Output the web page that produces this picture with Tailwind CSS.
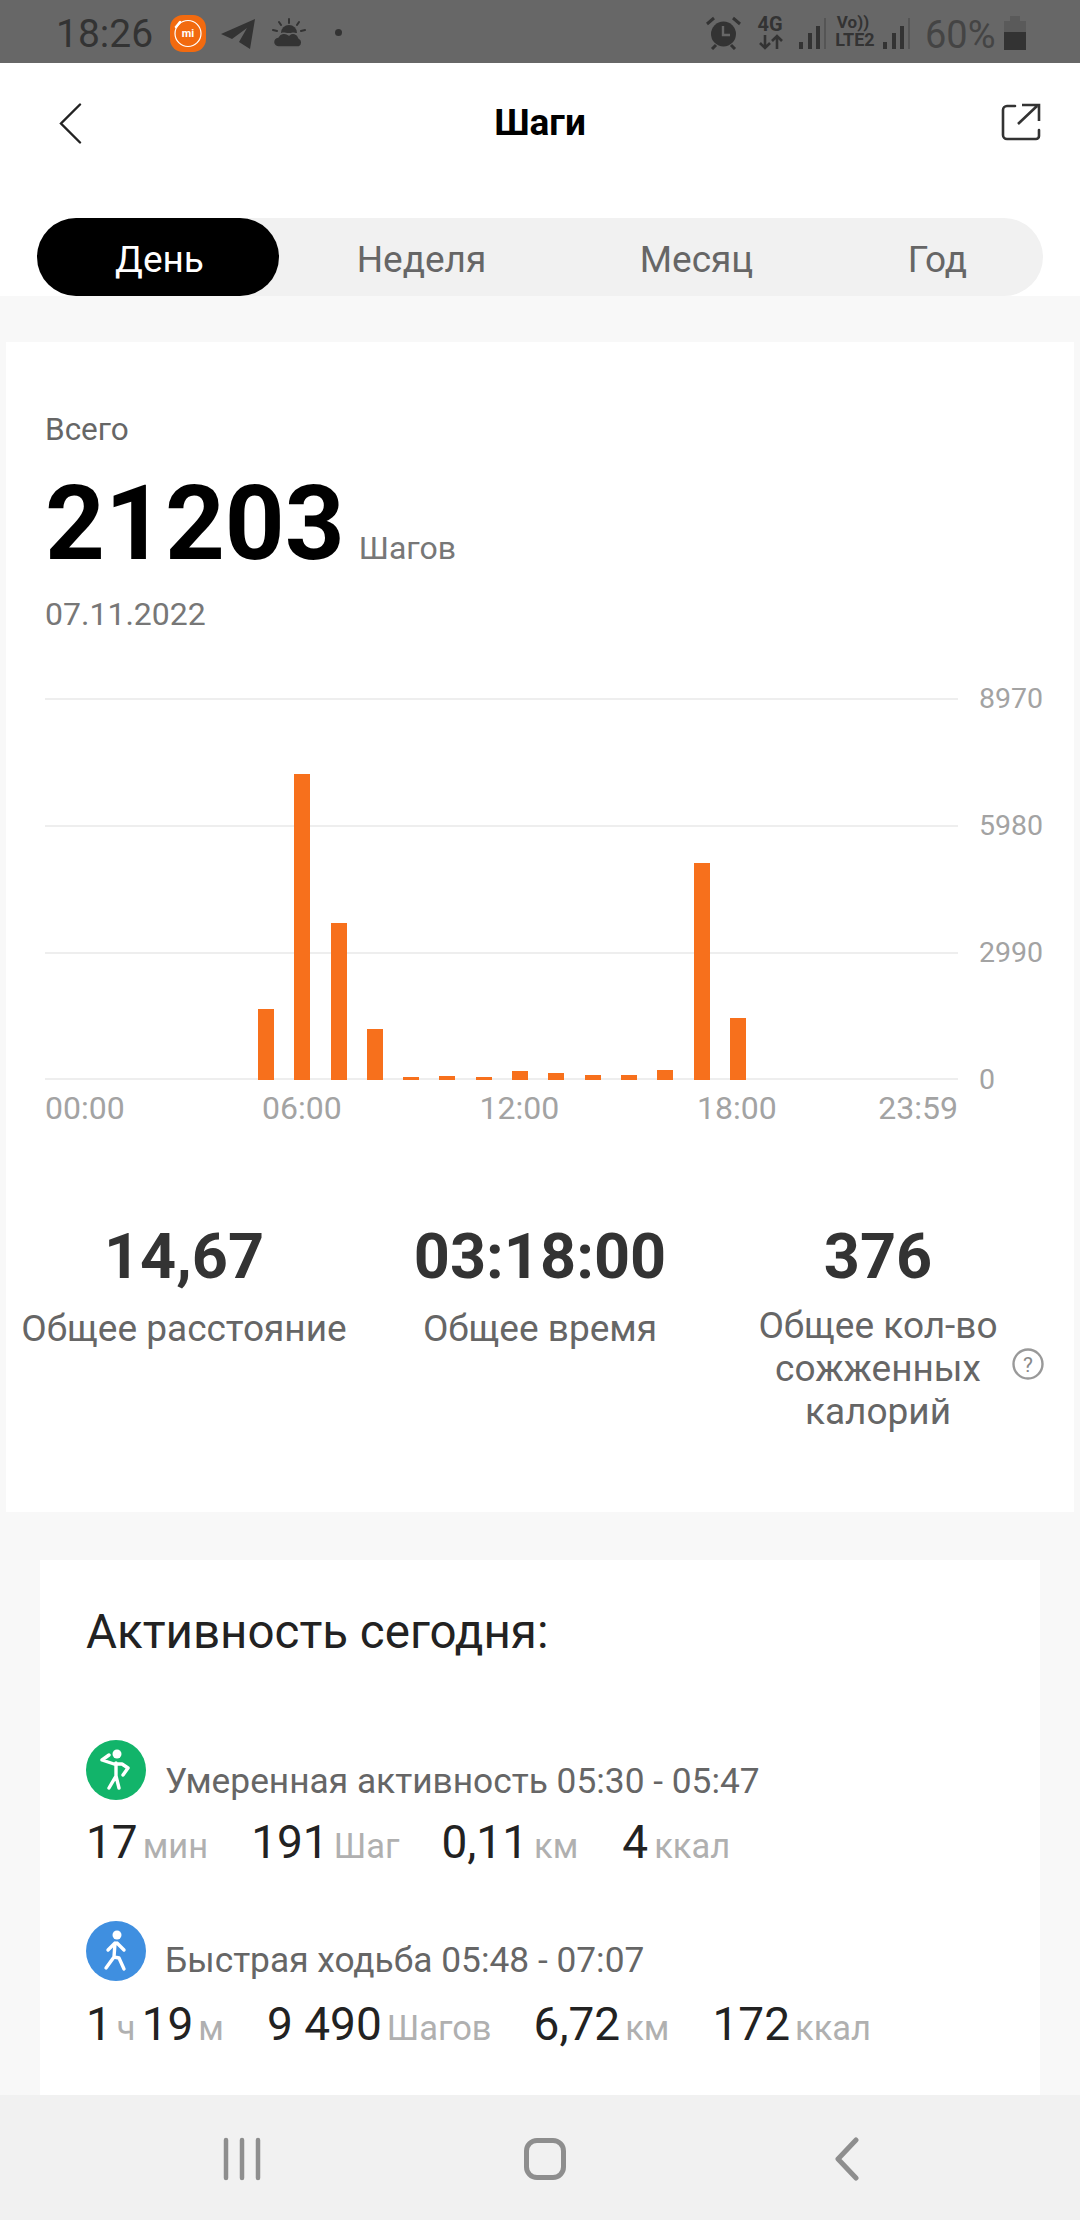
<!doctype html>
<html lang="ru">
<head>
<meta charset="utf-8">
<script src="https://cdn.jsdelivr.net/npm/@tailwindcss/browser@4"></script>
</head>
<body class="m-0">
<div class="w-[1080px] h-[2220px] flex flex-col overflow-hidden bg-[#f8f8f8] font-['Roboto',sans-serif]">
  <!-- status bar -->
  <div class="h-[63px] shrink-0 bg-[#676767] relative text-[#333]">
    <span class="absolute left-[56px] top-[11px] text-[39px] leading-[46px]">18:26</span>
    <div class="absolute left-[170px] top-[15px] w-[36px] h-[37px] rounded-[13px] bg-[#f26a0f] flex items-center justify-center">
      <svg class="absolute inset-0" width="36" height="37" viewBox="0 0 36 37"><circle cx="18" cy="18.5" r="13" fill="none" stroke="#fff" stroke-width="1.2"/><path d="M6 12 L10 7" stroke="#fff" stroke-width="2.4" stroke-linecap="round"/></svg>
      <span class="text-[11px] leading-none font-bold text-white relative">mi</span>
    </div>
    <svg class="absolute left-[221px] top-[19px]" width="34" height="30" viewBox="0 0 34 30"><path d="M0 15 L34 0 L29 30 L18 23 L26 9 L11 20 Z" fill="#333"/></svg>
    <svg class="absolute left-[272px] top-[18px]" width="34" height="30" viewBox="0 0 34 30"><path d="M9 15a8 8 0 0 1 16 0z" fill="#333"/><path d="M17 1v4M7 4l2 3M27 4l-2 3M1 12l4 1M33 12l-4 1" stroke="#333" stroke-width="2" stroke-linecap="round"/><path d="M7 29a5 5 0 0 1-1-10 7 7 0 0 1 11-2 6 6 0 0 1 10 3 5 5 0 0 1 0 9z" fill="#333" stroke="#676767" stroke-width="1.5"/></svg>
    <div class="absolute left-[335px] top-[29px] w-[7px] h-[7px] rounded-full bg-[#333]"></div>

    <svg class="absolute left-[706px] top-[16px]" width="35" height="34" viewBox="0 0 35 34"><circle cx="17.5" cy="18" r="12.5" fill="#333"/><path d="M17 10v9h7" stroke="#676767" stroke-width="2.4" fill="none"/><path d="M1 8l7-6M34 8l-7-6M6 33l4-4M29 33l-4-4" stroke="#333" stroke-width="3"/></svg>
    <div class="absolute left-[756px] top-[15px] w-[28px] text-center text-[20px] leading-[19px] font-bold">4G</div>
    <svg class="absolute left-[759px] top-[34px]" width="24" height="16" viewBox="0 0 24 16"><path d="M6 1v13M1 9l5 5 5-5M18 15V2M13 7l5-5 5 5" stroke="#333" stroke-width="2.6" fill="none"/></svg>
    <svg class="absolute left-[799px] top-[18px]" width="28" height="31" viewBox="0 0 28 31"><rect x="0" y="24" width="4" height="7" fill="#333"/><rect x="9" y="15" width="4" height="16" fill="#333"/><rect x="17" y="8" width="4" height="23" fill="#333"/><rect x="25" y="0" width="2" height="31" fill="#555"/></svg>
    <div class="absolute left-[832px] top-[13px] w-[46px] text-center font-bold text-[17px] leading-[18px]"><div class="pr-[4px]">Vo))</div><div class="text-[18px]">LTE2</div></div>
    <svg class="absolute left-[883px] top-[18px]" width="28" height="31" viewBox="0 0 28 31"><rect x="0" y="24" width="4" height="7" fill="#333"/><rect x="9" y="15" width="4" height="16" fill="#333"/><rect x="17" y="8" width="4" height="23" fill="#333"/><rect x="25" y="0" width="2" height="31" fill="#555"/></svg>
    <span class="absolute left-[925px] top-[13px] text-[38px] leading-[44px] text-[#444]">60%</span>
    <svg class="absolute left-[1004px] top-[16px]" width="22" height="34" viewBox="0 0 22 34"><path d="M6 0h10v5h6v29H0V5h6z" fill="#5a5a5a"/><rect y="16" width="22" height="18" fill="#333"/></svg>
  </div>

  <!-- top area -->
  <div class="shrink-0 bg-white h-[233px] flex flex-col">
    <div class="h-[155px] relative">
      <h1 class="pt-[37px] text-center text-[37px] leading-[46px] font-bold text-black">Шаги</h1>
      <svg class="absolute left-[59px] top-[40px]" width="23" height="41" viewBox="0 0 23 41"><path d="M21 1.5 L2 20.5 L21 39.5" fill="none" stroke="#222" stroke-width="2.4" stroke-linecap="round"/></svg>
      <svg class="absolute left-[1001px] top-[40px]" width="40" height="38" viewBox="0 0 40 38"><path d="M14 3H6a4 4 0 0 0-4 4v25a4 4 0 0 0 4 4h29a3 3 0 0 0 3-3v-6" fill="none" stroke="#333" stroke-width="2.6" stroke-linecap="round"/><path d="M17 21 L36 3M21 2h17v16" fill="none" stroke="#333" stroke-width="2.6"/></svg>
    </div>
    <div class="mx-[37px] h-[78px] rounded-[39px] bg-[#f1f1f1] flex text-[37px] leading-[84px] text-[#666] text-center">
      <div class="w-[242px] pl-[3px] rounded-[39px] bg-black text-white">День</div>
      <div class="w-[282px] pl-[3px]">Неделя</div>
      <div class="w-[268px] pl-[3px]">Месяц</div>
      <div class="w-[214px] pl-[3px]">Год</div>
    </div>
  </div>

  <!-- main -->
  <div class="flex-1 min-h-0 overflow-hidden pt-[46px]">
    <section class="mx-[6px] h-[1170px] bg-white pl-[39px] pt-[68px] relative">
      <div class="text-[31.5px] leading-[40px] text-[#666]">Всего</div>
      <div class="flex items-baseline mt-[18px] h-[112px]">
        <span class="text-[104.5px] leading-[112px] font-bold text-black">21203</span>
        <span class="ml-[14px] text-[32px] text-[#777]">Шагов</span>
      </div>
      <div class="text-[32px] leading-[40px] mt-[14px] text-[#777]">07.11.2022</div>

      <!-- chart -->
      <div class="relative mt-[64px] w-[913px] h-[382px]">
        <div class="absolute inset-x-0 top-0 border-t-2 border-[#eeeeee]"></div>
        <div class="absolute inset-x-0 top-[127px] border-t-2 border-[#eeeeee]"></div>
        <div class="absolute inset-x-0 top-[254px] border-t-2 border-[#eeeeee]"></div>
        <div class="absolute inset-x-0 top-[380px] border-t-2 border-[#eeeeee]"></div>
        <div class="absolute left-[934px] top-[-19px] text-[28.5px] leading-[40px] text-[#a3a3a3]">8970</div>
        <div class="absolute left-[934px] top-[108px] text-[28.5px] leading-[40px] text-[#a3a3a3]">5980</div>
        <div class="absolute left-[934px] top-[235px] text-[28.5px] leading-[40px] text-[#a3a3a3]">2990</div>
        <div class="absolute left-[934px] top-[362px] text-[28.5px] leading-[40px] text-[#a3a3a3]">0</div>
        <div class="absolute inset-0 pl-[213px] flex items-end gap-[20.3px]">
          <div class="w-[16px] h-[71px] bg-[#f7701c]"></div>
          <div class="w-[16px] h-[306px] bg-[#f7701c]"></div>
          <div class="w-[16px] h-[157px] bg-[#f7701c]"></div>
          <div class="w-[16px] h-[51px] bg-[#f7701c]"></div>
          <div class="w-[16px] h-[3px] bg-[#f7701c]"></div>
          <div class="w-[16px] h-[4px] bg-[#f7701c]"></div>
          <div class="w-[16px] h-[3px] bg-[#f7701c]"></div>
          <div class="w-[16px] h-[9px] bg-[#f7701c]"></div>
          <div class="w-[16px] h-[7px] bg-[#f7701c]"></div>
          <div class="w-[16px] h-[5px] bg-[#f7701c]"></div>
          <div class="w-[16px] h-[5px] bg-[#f7701c]"></div>
          <div class="w-[16px] h-[10px] bg-[#f7701c]"></div>
          <div class="w-[16px] h-[217px] bg-[#f7701c]"></div>
          <div class="w-[16px] h-[62px] bg-[#f7701c]"></div>
        </div>
      </div>
      <div class="w-[913px] flex mt-[8px] text-[32px] leading-[40px] text-[#a3a3a3]">
        <span class="w-[217px]">00:00</span><span class="w-[217.5px]">06:00</span><span class="w-[217.5px]">12:00</span><span class="w-[180px]">18:00</span><span class="ml-auto">23:59</span>
      </div>

      <!-- stats -->
      <div class="absolute left-0 right-0 top-[878px] text-center">
        <div class="absolute left-0 w-[356px]">
          <div class="text-[63px] leading-[74px] font-bold text-[#333]">14,67</div>
          <div class="mt-[13px] text-[37px] leading-[44px] text-[#666]">Общее расстояние</div>
        </div>
        <div class="absolute left-[356px] w-[356px]">
          <div class="text-[63px] leading-[74px] font-bold text-[#333]">03:18:00</div>
          <div class="mt-[13px] text-[37px] leading-[44px] text-[#666]">Общее время</div>
        </div>
        <div class="absolute left-[712px] w-[320px]">
          <div class="text-[63px] leading-[74px] font-bold text-[#333]">376</div>
          <div class="mt-[10px] text-[37px] leading-[43px] text-[#666]">Общее кол-во<br>сожженных<br>калорий</div>
        </div>
        <svg class="absolute left-[1006px] top-[127px]" width="32" height="34" viewBox="0 0 32 34"><circle cx="16" cy="17" r="14.5" fill="none" stroke="#999" stroke-width="2.4"/><text x="16" y="24.5" text-anchor="middle" font-size="21" fill="#888" font-family="Roboto">?</text></svg>
      </div>
    </section>

    <section class="mx-[40px] mt-[48px] h-[600px] bg-white pl-[46px] pt-[44px]">
      <div class="text-[47.5px] leading-[56px] text-[#222]">Активность сегодня:</div>
      <div class="mt-[80px] flex items-center h-[60px]">
        <svg class="shrink-0" width="60" height="60" viewBox="0 0 60 60"><circle cx="30" cy="30" r="30" fill="#12b46a"/><circle cx="31" cy="14" r="4.5" fill="#fff"/><path d="M23 15 L16 20 L28 24 H36 L42 28 L37 35 M30 23 V36 L23 48 M30 36 L33 48" fill="none" stroke="#fff" stroke-width="3.4" stroke-linecap="round" stroke-linejoin="round"/></svg>
        <span class="ml-[19px] pt-[21px] text-[35.3px] leading-[40px] text-[#666]">Умеренная активность 05:30 - 05:47</span>
      </div>
      <div class="mt-[14px] flex items-baseline h-[56px] text-[46px] leading-[56px] text-[#222]">
        <span>17</span><span class="ml-[5px] text-[34.5px] text-[#b0b0b0]">мин</span>
        <span class="ml-[43px]">191</span><span class="ml-[5px] text-[34.5px] text-[#b0b0b0]">Шаг</span>
        <span class="ml-[42px]">0,11</span><span class="ml-[6px] text-[34.5px] text-[#b0b0b0]">км</span>
        <span class="ml-[44px]">4</span><span class="ml-[6px] text-[34.5px] text-[#b0b0b0]">ккал</span>
      </div>
      <div class="mt-[51px] flex items-center h-[60px]">
        <svg class="shrink-0" width="60" height="60" viewBox="0 0 60 60"><circle cx="30" cy="30" r="30" fill="#3f8fe0"/><circle cx="31" cy="14" r="4.5" fill="#fff"/><path d="M29 22 L28 36 L20 47 M28 36 L33 37 L38 48 M29 22 L22 29 M31 22 L38 29" fill="none" stroke="#fff" stroke-width="3.4" stroke-linecap="round" stroke-linejoin="round"/></svg>
        <span class="ml-[19px] pt-[17px] text-[35.3px] leading-[40px] text-[#666]">Быстрая ходьба 05:48 - 07:07</span>
      </div>
      <div class="mt-[15px] flex items-baseline h-[56px] text-[46px] leading-[56px] text-[#222]">
        <span>1</span><span class="ml-[5px] text-[34.5px] text-[#b0b0b0]">ч</span>
        <span class="ml-[6px]">19</span><span class="ml-[5px] text-[34.5px] text-[#b0b0b0]">м</span>
        <span class="ml-[43px]">9 490</span><span class="ml-[5px] text-[34.5px] text-[#b0b0b0]">Шагов</span>
        <span class="ml-[42px]">6,72</span><span class="ml-[5px] text-[34.5px] text-[#b0b0b0]">км</span>
        <span class="ml-[43px]">172</span><span class="ml-[5px] text-[34.5px] text-[#b0b0b0]">ккал</span>
      </div>
    </section>
  </div>

  <!-- nav -->
  <div class="h-[125px] shrink-0 bg-[#f1f1f1] relative">
    <svg class="absolute left-[220px] top-[42px]" width="44" height="44" viewBox="0 0 44 44"><path d="M6 3V41M22 3V41M38 3V41" stroke="#8e8e8e" stroke-width="4.5" stroke-linecap="round"/></svg>
    <div class="absolute left-[524px] top-[43px] w-[42px] h-[42px] rounded-[13px] border-[5px] border-[#8e8e8e]"></div>
    <svg class="absolute left-[832px] top-[42px]" width="28" height="44" viewBox="0 0 28 44"><path d="M24 3 L6 22 L24 41" fill="none" stroke="#8e8e8e" stroke-width="5" stroke-linecap="round" stroke-linejoin="round"/></svg>
  </div>
</div>
</body>
</html>
